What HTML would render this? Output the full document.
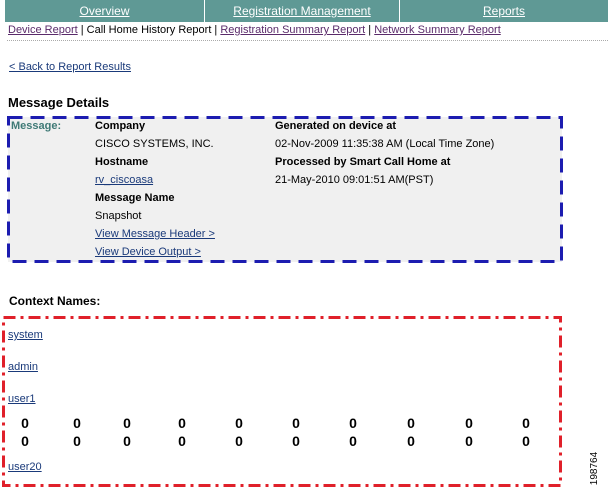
<!DOCTYPE html>
<html><head><meta charset="utf-8"><style>
body{margin:0;width:608px;height:492px;background:#fff;font-family:"Liberation Sans",Arial,sans-serif;font-size:11px;color:#000;position:relative;overflow:hidden}
.a{position:absolute;white-space:nowrap}
a{color:#1a3a7a;text-decoration:underline}
.nav{position:absolute;top:0;height:22px;background:#5f9995;color:#fff;text-align:center;line-height:22px;font-size:12px;text-decoration:underline}
.z{position:absolute;font-weight:bold;font-size:14px;width:20px;text-align:center}
</style></head><body>
<div class="nav" style="left:5px;width:199px">Overview</div>
<div class="nav" style="left:205px;width:194px">Registration Management</div>
<div class="nav" style="left:400px;width:208px">Reports</div>
<div class="a" style="left:8px;top:24px"><a style="color:#5a2a6a">Device Report</a> | Call Home History Report | <a style="color:#5a2a6a">Registration Summary Report</a> | <a style="color:#5a2a6a">Network Summary Report</a></div>
<div class="a" style="left:7px;top:40px;width:601px;border-top:1px dotted #aaa"></div>
<div class="a" style="left:9px;top:61px"><a>&lt; Back to Report Results</a></div>
<div class="a" style="left:8px;top:95px;font-size:13px;font-weight:bold">Message Details</div>
<div class="a" style="left:8px;top:117px;width:554px;height:145px;background:#f0f0f0"></div>
<svg class="a" style="left:0;top:0" width="608" height="492">
<rect x="8.5" y="117.5" width="553" height="144" fill="none" stroke="#1c1cb0" stroke-width="3" stroke-dasharray="14 8"/>
<rect x="3.5" y="317.5" width="557" height="168" fill="none" stroke="#e0202a" stroke-width="3" stroke-dasharray="12 5 3 5"/>
</svg>
<div class="a" style="left:11px;top:120px;color:#3f7a76;font-weight:bold">Message:</div>
<div class="a" style="left:95px;top:120px;font-weight:bold">Company</div>
<div class="a" style="left:95px;top:138px">CISCO SYSTEMS, INC.</div>
<div class="a" style="left:95px;top:156px;font-weight:bold">Hostname</div>
<div class="a" style="left:95px;top:174px"><a>rv_ciscoasa</a></div>
<div class="a" style="left:95px;top:192px;font-weight:bold">Message Name</div>
<div class="a" style="left:95px;top:210px">Snapshot</div>
<div class="a" style="left:95px;top:228px"><a>View Message Header &gt;</a></div>
<div class="a" style="left:95px;top:246px"><a>View Device Output &gt;</a></div>
<div class="a" style="left:275px;top:120px;font-weight:bold">Generated on device at</div>
<div class="a" style="left:275px;top:138px">02-Nov-2009 11:35:38 AM (Local Time Zone)</div>
<div class="a" style="left:275px;top:156px;font-weight:bold">Processed by Smart Call Home at</div>
<div class="a" style="left:275px;top:174px">21-May-2010 09:01:51 AM(PST)</div>
<div class="a" style="left:9px;top:294px;font-size:12px;font-weight:bold">Context Names:</div>
<div class="a" style="left:8px;top:329px"><a>system</a></div>
<div class="a" style="left:8px;top:361px"><a>admin</a></div>
<div class="a" style="left:8px;top:393px"><a>user1</a></div>
<div class="a" style="left:8px;top:461px"><a>user20</a></div>
<div class="z" style="left:15px;top:415px">0</div><div class="z" style="left:67px;top:415px">0</div><div class="z" style="left:117px;top:415px">0</div><div class="z" style="left:172px;top:415px">0</div><div class="z" style="left:229px;top:415px">0</div><div class="z" style="left:286px;top:415px">0</div><div class="z" style="left:343px;top:415px">0</div><div class="z" style="left:401px;top:415px">0</div><div class="z" style="left:459px;top:415px">0</div><div class="z" style="left:516px;top:415px">0</div>
<div class="z" style="left:15px;top:433px">0</div><div class="z" style="left:67px;top:433px">0</div><div class="z" style="left:117px;top:433px">0</div><div class="z" style="left:172px;top:433px">0</div><div class="z" style="left:229px;top:433px">0</div><div class="z" style="left:286px;top:433px">0</div><div class="z" style="left:343px;top:433px">0</div><div class="z" style="left:401px;top:433px">0</div><div class="z" style="left:459px;top:433px">0</div><div class="z" style="left:516px;top:433px">0</div>
<div class="a" style="left:578px;top:463px;font-size:10px;transform:rotate(-90deg);transform-origin:center">198764</div>
</body></html>
